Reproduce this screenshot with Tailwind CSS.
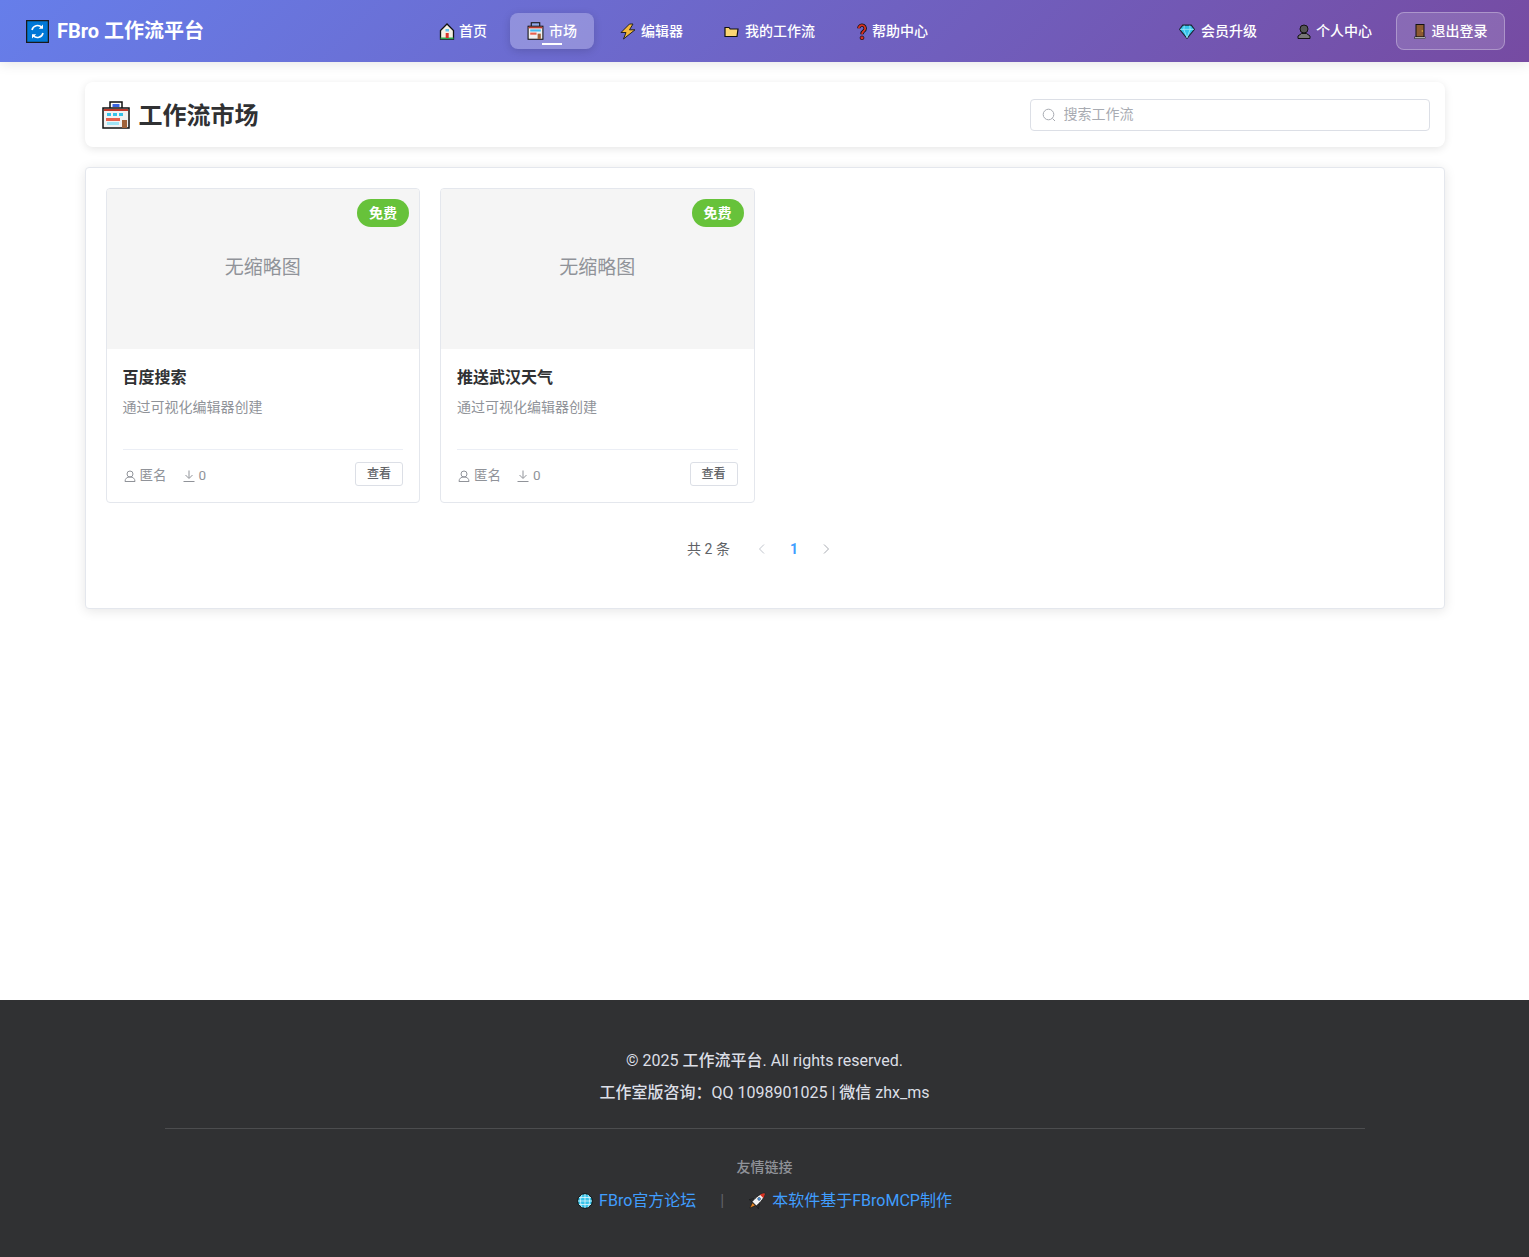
<!DOCTYPE html>
<html lang="zh-CN">
<head>
    <meta charset="UTF-8" />
    <meta name="viewport" content="width=device-width, initial-scale=1.0"/>
    <title>FBro 工作流平台</title>
    <script src="https://cdn.jsdelivr.net/npm/@tailwindcss/browser@4"></script>
</head>
<body class="bg-white min-h-screen flex flex-col font-['Roboto','Noto_Sans_CJK_SC',sans-serif] text-[#303133]">

    <!-- 顶部导航 -->
    <header class="h-[62px] shrink-0 flex items-center pl-[26px] pr-[24px] bg-[linear-gradient(135deg,#667eea_0%,#764ba2_100%)] shadow-[0_2px_12px_rgba(0,0,0,0.1)] text-white">
        <div class="flex items-center gap-[8px] w-[396px]">
            <svg class="w-[23px] h-[23px] shrink-0" viewBox="0 0 23 23">
                <rect x="0.5" y="0.5" width="22" height="22" fill="#0078d7" stroke="#1a1a1a" stroke-width="1.5"/>
                <path d="M6 10a5.6 5.6 0 0 1 9.8-2.4M17 13a5.6 5.6 0 0 1-9.8 2.4" fill="none" stroke="#fff" stroke-width="1.6"/>
                <path d="M17 4.5v4.2h-4.2zM6 18.5v-4.2h4.2z" fill="#fff"/>
            </svg>
            <span class="text-[20px] font-bold leading-none whitespace-nowrap">FBro 工作流平台</span>
        </div>

        <nav class="flex items-center text-[14px] font-medium">
            <a class="flex items-center gap-[4px] h-[36px] px-[17px]">
                <svg class="w-[16px] h-[17px] shrink-0" viewBox="0 0 16 17">
                    <path d="M8 1 1.5 7.5V16h13V7.500z" fill="#f5efe3" stroke="#111" stroke-width="1.3"/>
                    <rect x="1.5" y="14.5" width="13" height="1.6" fill="#2fa84f"/>
                    <rect x="6.7" y="10" width="3" height="5" fill="#d9332b"/>
                    <rect x="6.5" y="6" width="3.5" height="2.5" fill="#5fc4ee"/>
                </svg>
                首页
            </a>
            <a class="relative ml-[6px] flex items-center gap-[5px] h-[36px] px-[17px] rounded-lg bg-white/25 shadow-[0_2px_8px_rgba(0,0,0,0.15)]">
                <svg class="w-[17px] h-[18px] shrink-0" viewBox="0 0 16 17">
                    <rect x="4" y="0.7" width="8" height="4" fill="#8fa8e8" stroke="#111"/>
                    <rect x="1" y="4" width="14" height="12.3" fill="#f0f0f0" stroke="#111"/>
                    <rect x="1.5" y="4.5" width="13" height="1.5" fill="#c0392b"/>
                    <rect x="3" y="7" width="10" height="2" fill="#43bdf0"/>
                    <rect x="3" y="10" width="6" height="2" fill="#e8604c"/>
                    <rect x="10" y="11" width="3" height="5" fill="#a0633a"/>
                </svg>
                市场
                <span class="absolute left-[32px] bottom-[4px] w-[20px] h-[2px] bg-white"></span>
            </a>
            <a class="ml-[9px] flex items-center gap-[5px] h-[36px] px-[17px]">
                <svg class="w-[16px] h-[17px] shrink-0" viewBox="0 0 16 17">
                    <path d="M9.5 1 1 9.5h5L3.5 16 15 6.800H9.500L13 1z" fill="#f6b93b" stroke="#222" stroke-width="1"/>
                </svg>
                编辑器
            </a>
            <a class="ml-[7px] flex items-center gap-[6px] h-[36px] px-[17px]">
                <svg class="w-[15px] h-[13px] shrink-0" viewBox="0 0 15 13">
                    <path d="M1 11.5V2.500h4l1.200 1.500H14L13 11.500z" fill="#fcd672" stroke="#111" stroke-width="1.2"/>
                </svg>
                我的工作流
            </a>
            <a class="ml-[7px] flex items-center gap-[4px] h-[36px] px-[17px]">
                <svg class="w-[12px] h-[17px] shrink-0" viewBox="0 0 10 16">
                    <path d="M2 5a3 3 0 1 1 4.700 2.500C5.500 8.400 5 9 5 10.500" fill="none" stroke="#111" stroke-width="3.200"/>
                    <path d="M2 5a3 3 0 1 1 4.700 2.500C5.500 8.400 5 9 5 10.500" fill="none" stroke="#d9301f" stroke-width="1.700"/>
                    <circle cx="5" cy="14" r="1.800" fill="#d9301f" stroke="#111" stroke-width="0.700"/>
                </svg>
                帮助中心
            </a>
        </nav>

        <div class="ml-auto flex items-center text-[14px] font-medium">
            <a class="flex items-center gap-[6px] mr-[40px]">
                <svg class="w-[16px] h-[15px] shrink-0" viewBox="0 0 15 14">
                    <path d="M3.5 1h8L14.500 5 7.500 13.500.5 5z" fill="#35c3ea" stroke="#1a2530" stroke-width="1"/>
                    <path d="M1 5h13M5 1.500 4.500 5l3 8 3-8L10 1.500" fill="none" stroke="#a6ecfb" stroke-width="0.7"/>
                </svg>
                会员升级
            </a>
            <a class="flex items-center gap-[5px] mr-[24px]">
                <svg class="w-[14px] h-[15px] shrink-0" viewBox="0 0 14 15">
                    <circle cx="7" cy="5" r="4" fill="#555" stroke="#111"/>
                    <path d="M1 14.5v-2.500l3.500-2.500h5l3.500 2.500v2.500z" fill="#777" stroke="#111"/>
                </svg>
                个人中心
            </a>
            <a class="flex items-center gap-[6px] h-[38px] w-[109px] justify-center rounded-lg border border-white/30 bg-white/15">
                <svg class="w-[12px] h-[15px] shrink-0" viewBox="0 0 12 15">
                    <rect x="2" y="0.5" width="8" height="12.5" fill="#8d5a32" stroke="#111"/>
                    <rect x="0.5" y="13" width="11" height="1.5" fill="#ddd" stroke="#111" stroke-width="0.5"/>
                    <circle cx="8.3" cy="7" r="0.7" fill="#f0c040"/>
                </svg>
                退出登录
            </a>
        </div>
    </header>

    <main class="flex-1 h-[938px] px-[84.5px] pt-[20px]">
        <!-- 标题栏 -->
        <div class="h-[65px] flex items-center justify-between pl-[17px] pr-[15px] rounded-lg bg-white shadow-[0_2px_8px_rgba(0,0,0,0.1)]">
            <h1 class="flex items-center gap-[9px] text-[24px] font-semibold text-[#303133] leading-none">
                <svg class="w-[28px] h-[28px] shrink-0" viewBox="0 0 28 28">
                    <rect x="8" y="1" width="12" height="7" fill="#fff" stroke="#111" stroke-width="1.5"/>
                    <rect x="1" y="7" width="26" height="20" fill="#f2f2f2" stroke="#111" stroke-width="1.5"/>
                    <rect x="2" y="8" width="24" height="2" fill="#c0392b"/>
                    <rect x="5" y="12" width="4" height="3" fill="#35c3ea"/>
                    <rect x="11" y="12" width="4" height="3" fill="#35c3ea"/>
                    <rect x="17" y="12" width="4" height="3" fill="#35c3ea"/>
                    <rect x="4" y="17" width="14" height="3" fill="#e8604c"/>
                    <rect x="5" y="21" width="12" height="3" fill="#9fe3f5"/>
                    <rect x="20" y="19" width="5" height="8" fill="#a0633a"/>
                    <rect x="10.5" y="3" width="7" height="3" fill="#3b63e0"/>
                </svg>
                <span class="relative top-[1px]">工作流市场</span>
            </h1>
            <label class="w-[400px] h-[32px] flex items-center gap-[8px] px-[11px] rounded border border-[#dcdfe6] bg-white">
                <svg class="w-[14px] h-[14px] shrink-0 text-[#a8abb2]" viewBox="0 0 14 14" fill="none" stroke="currentColor">
                    <circle cx="6.5" cy="6.5" r="5.3"/>
                    <path d="m10.5 10.500 2.500 2.500"/>
                </svg>
                <input type="text" placeholder="搜索工作流" class="flex-1 outline-none text-[14px] placeholder:text-[#a8abb2]"/>
            </label>
        </div>

        <!-- 工作流列表 -->
        <section class="mt-[20px] h-[442px] rounded border border-[#e4e7ed] bg-white p-[20px] shadow-[0_2px_12px_rgba(0,0,0,0.1)]">
            <div class="grid grid-cols-4 gap-[20px]">
                <article class="h-[315px] flex flex-col rounded border border-[#e4e7ed] bg-white overflow-hidden">
                    <div class="relative h-[160px] shrink-0 flex items-center justify-center bg-[#f5f5f5] text-[19px] leading-[26px] pb-[2px] text-[#909399]">
                        无缩略图
                        <span class="absolute top-[10px] right-[10px] h-[28px] w-[52px] flex items-center justify-center rounded-full bg-[#67c23a] text-[14px] font-bold text-white">免费</span>
                    </div>
                    <div class="flex-1 flex flex-col px-[16px] pt-[16px] pb-[16px]">
                        <h3 class="text-[16px] leading-[26px] font-semibold text-[#303133]">百度搜索</h3>
                        <p class="mt-[4px] text-[14px] leading-[24px] text-[#909399]">通过可视化编辑器创建</p>
                        <div class="mt-auto pt-[12px] flex items-center justify-between border-t border-[#ebeef5]">
                            <div class="mt-[3px] flex items-center text-[13.5px] text-[#909399]">
                                <svg class="w-[12px] h-[12px] mr-[4px] ml-[1px] shrink-0" viewBox="0 0 12 12" fill="none" stroke="currentColor">
                                    <circle cx="6" cy="4" r="3"/><path d="M1 11.5c0-3 2-4.500 5-4.500s5 1.500 5 4.500z"/>
                                </svg>
                                匿名
                                <svg class="w-[12px] h-[12px] ml-[16px] mr-[4px] shrink-0" viewBox="0 0 12 12" fill="none" stroke="currentColor">
                                    <path d="M6 .5v7.500M2.500 5 6 8.500 9.500 5M.5 11.500h11"/>
                                </svg>
                                0
                            </div>
                            <button class="w-[48px] h-[24px] rounded-[3px] border border-[#dcdfe6] bg-white text-[12px] font-medium text-[#606266]">查看</button>
                        </div>
                    </div>
                </article>
                <article class="h-[315px] flex flex-col rounded border border-[#e4e7ed] bg-white overflow-hidden">
                    <div class="relative h-[160px] shrink-0 flex items-center justify-center bg-[#f5f5f5] text-[19px] leading-[26px] pb-[2px] text-[#909399]">
                        无缩略图
                        <span class="absolute top-[10px] right-[10px] h-[28px] w-[52px] flex items-center justify-center rounded-full bg-[#67c23a] text-[14px] font-bold text-white">免费</span>
                    </div>
                    <div class="flex-1 flex flex-col px-[16px] pt-[16px] pb-[16px]">
                        <h3 class="text-[16px] leading-[26px] font-semibold text-[#303133]">推送武汉天气</h3>
                        <p class="mt-[4px] text-[14px] leading-[24px] text-[#909399]">通过可视化编辑器创建</p>
                        <div class="mt-auto pt-[12px] flex items-center justify-between border-t border-[#ebeef5]">
                            <div class="mt-[3px] flex items-center text-[13.5px] text-[#909399]">
                                <svg class="w-[12px] h-[12px] mr-[4px] ml-[1px] shrink-0" viewBox="0 0 12 12" fill="none" stroke="currentColor">
                                    <circle cx="6" cy="4" r="3"/><path d="M1 11.5c0-3 2-4.500 5-4.500s5 1.500 5 4.500z"/>
                                </svg>
                                匿名
                                <svg class="w-[12px] h-[12px] ml-[16px] mr-[4px] shrink-0" viewBox="0 0 12 12" fill="none" stroke="currentColor">
                                    <path d="M6 .5v7.500M2.500 5 6 8.500 9.500 5M.5 11.500h11"/>
                                </svg>
                                0
                            </div>
                            <button class="w-[48px] h-[24px] rounded-[3px] border border-[#dcdfe6] bg-white text-[12px] font-medium text-[#606266]">查看</button>
                        </div>
                    </div>
                </article>
            </div>

            <!-- 分页 -->
            <div class="mt-[30px] h-[32px] flex items-center justify-center text-[14px] text-[#606266]">
                <span class="mr-[16px]">共 2 条</span>
                <svg class="w-[12px] h-[12px] text-[#c0c4cc] mx-[10px] shrink-0" viewBox="0 0 12 12" fill="none" stroke="currentColor"><path d="M8 1.500 3.500 6 8 10.500"/></svg>
                <span class="w-[32px] text-center font-bold text-[#409eff]">1</span>
                <svg class="w-[12px] h-[12px] text-[#a8abb2] mx-[10px] shrink-0" viewBox="0 0 12 12" fill="none" stroke="currentColor"><path d="M4 1.500 8.500 6 4 10.500"/></svg>
            </div>
        </section>
    </main>

    <!-- 页脚 -->
    <footer class="h-[257px] shrink-0 bg-[#303133] pt-[45px] text-center text-[16px] text-[#dcdfe6]">
        <p class="leading-[32px]">© 2025 <span class="font-medium">工作流平台</span>. All rights reserved.</p>
        <p class="leading-[32px]"><span class="font-medium">工作室版咨询：</span>QQ 1098901025 | <span class="font-medium">微信</span> zhx_ms</p>
        <div class="mx-auto mt-[19px] w-[1200px] border-t border-[#4c4d4f] pt-[28px]">
            <p class="text-[14px] font-medium leading-[20px] text-[#909399]">友情链接</p>
            <div class="mt-[12px] flex items-center justify-center text-[16px] leading-[24px] text-[#409eff]">
                <a class="flex items-center gap-[6px]">
                    <svg class="w-[16px] h-[16px] shrink-0" viewBox="0 0 16 16">
                        <circle cx="8" cy="8" r="7.3" fill="#35c3ea" stroke="#111"/>
                        <path d="M1 8h14M2 4.500h12M2 11.500h12M8 1v14M5 1.800c-2 3.500-2 8.900 0 12.400M11 1.800c2 3.500 2 8.900 0 12.400" fill="none" stroke="#dff6fd" stroke-width="0.8"/>
                    </svg>
                    FBro官方论坛
                </a>
                <span class="mx-[24px] text-[#606266]">|</span>
                <a class="flex items-center gap-[6px]">
                    <svg class="w-[18px] h-[18px] shrink-0" viewBox="0 0 18 18">
                        <g transform="rotate(45 9 9)">
                            <path d="M5.500 9 2.500 13.500 6 13zM12.500 9 15.500 13.500 12 13z" fill="#333" stroke="#111" stroke-width="0.5"/>
                            <path d="M9 -2C12 1 12.500 7 12 13H6C5.500 7 6 1 9 -2z" fill="#f2f2f2" stroke="#111" stroke-width="0.8"/>
                            <path d="M9 -2C10.200 -0.800 11 1 11.400 2.500H6.600C7 1 7.800 -0.800 9 -2z" fill="#d9301f"/>
                            <circle cx="9" cy="6" r="1.500" fill="#4a90d9" stroke="#333" stroke-width="0.4"/>
                            <path d="M7 13.500h4L9 19z" fill="#f08a24" stroke="#111" stroke-width="0.5"/>
                        </g>
                    </svg>
                    本软件基于FBroMCP制作
                </a>
            </div>
        </div>
    </footer>
</body>
</html>
